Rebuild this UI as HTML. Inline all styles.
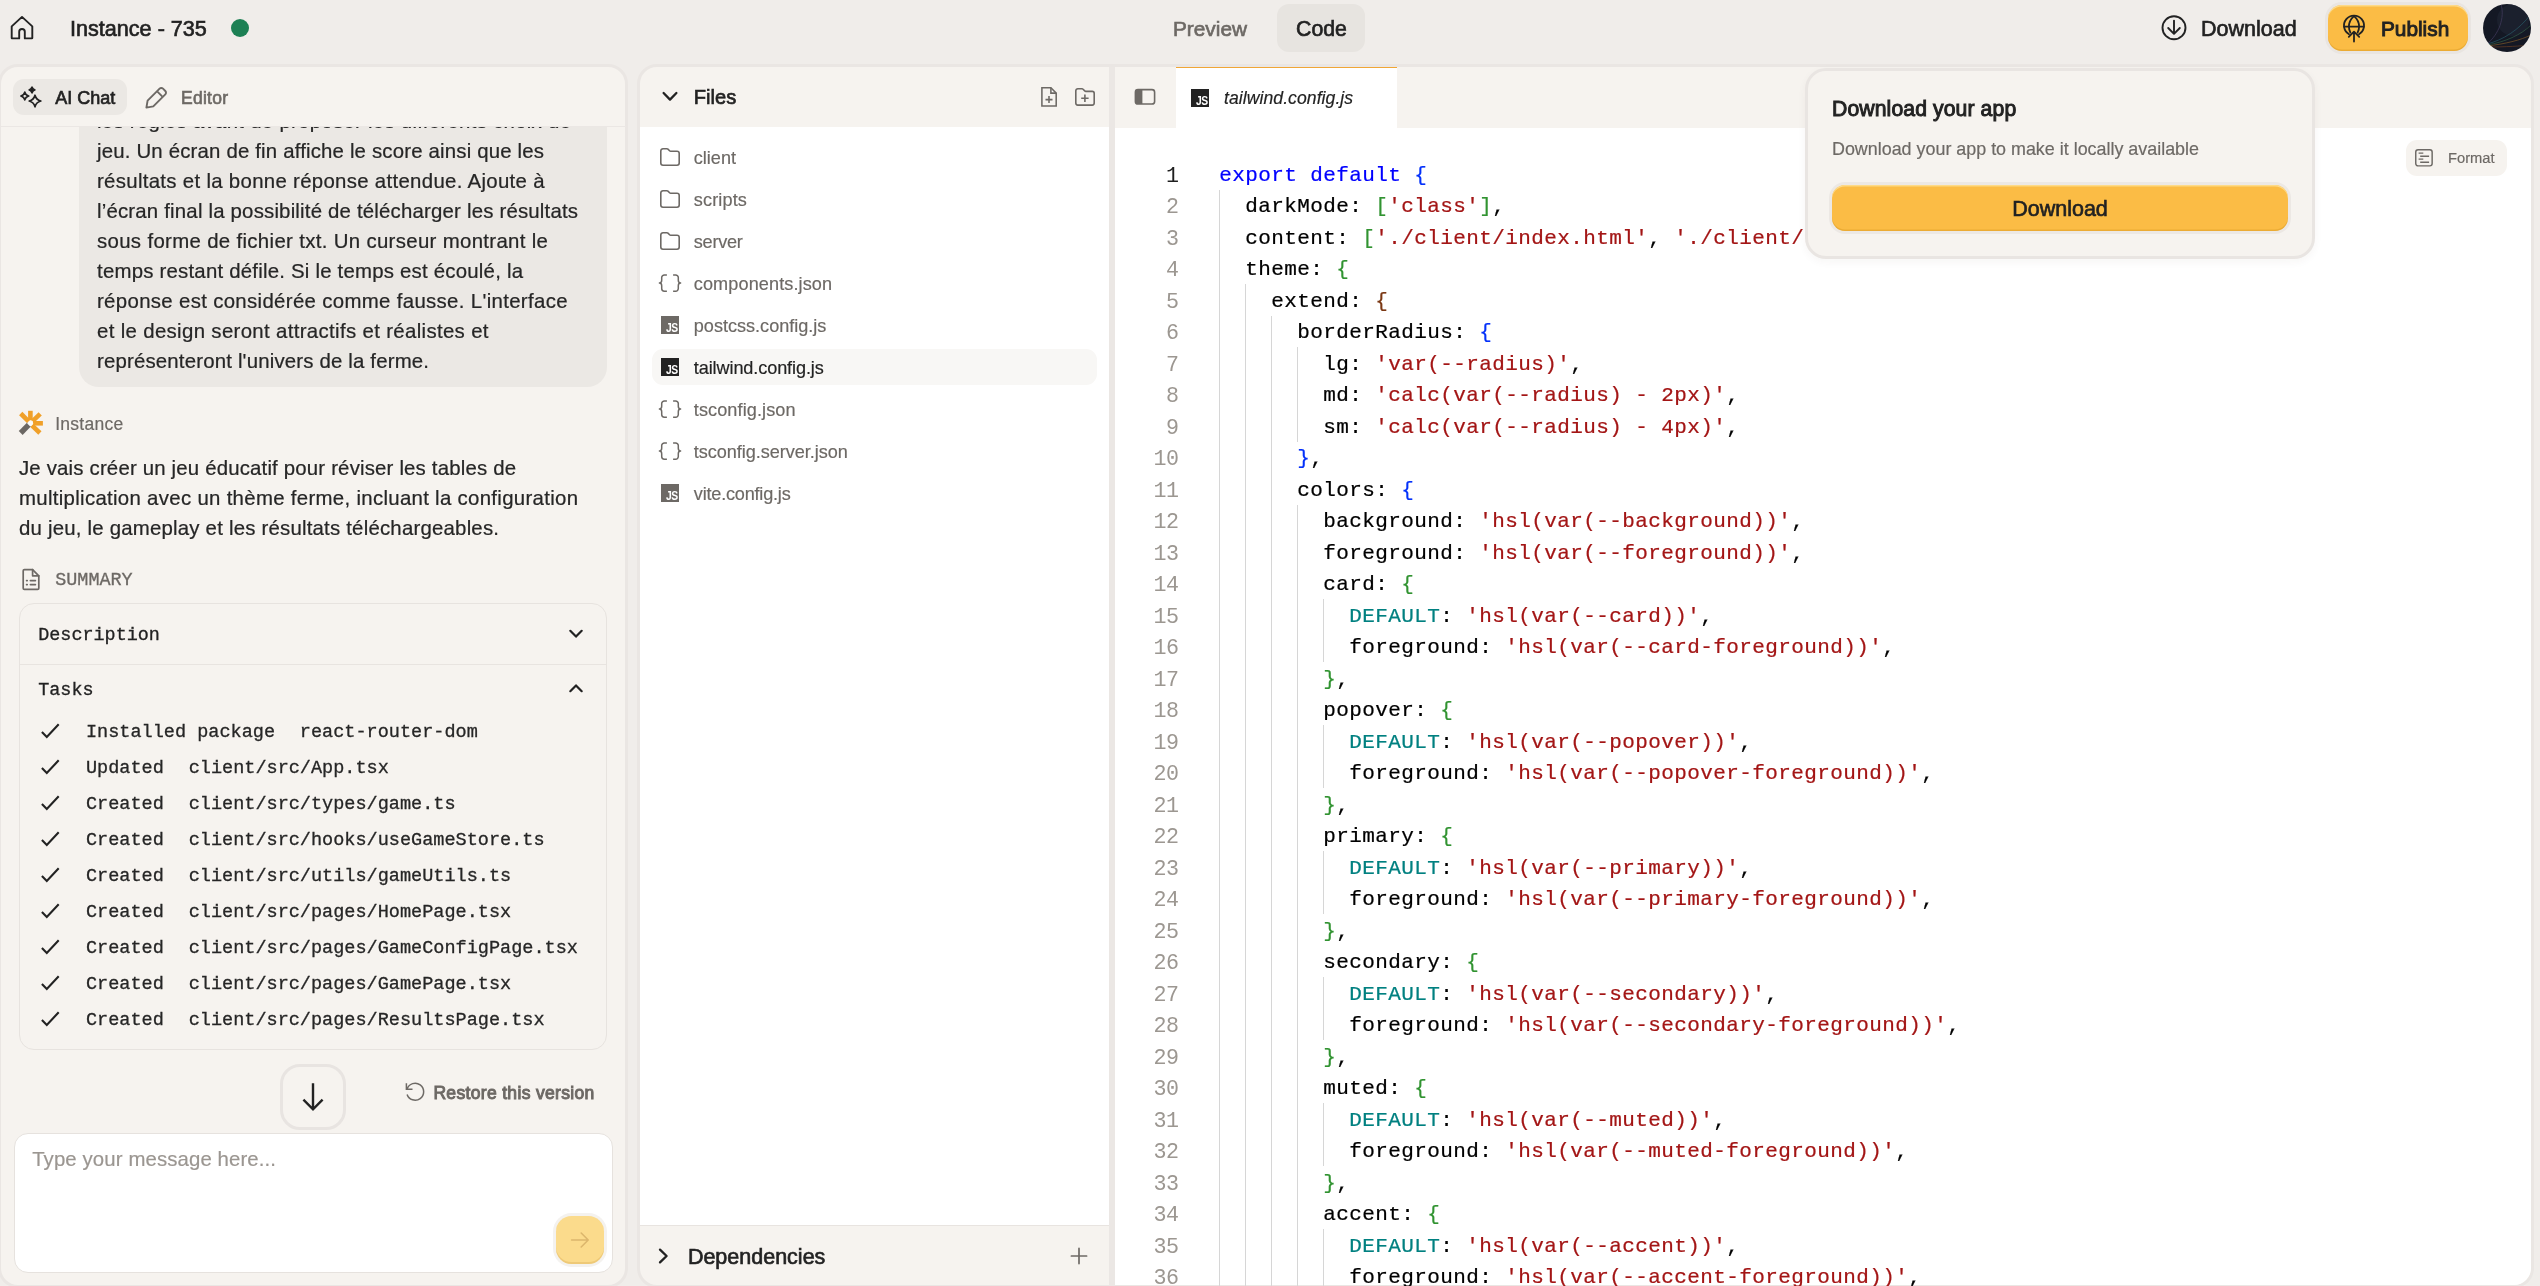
<!DOCTYPE html>
<html lang="en">
<head>
<meta charset="utf-8">
<title>Instance - 735</title>
<style>
*{box-sizing:border-box;margin:0;padding:0}
html,body{width:2540px;height:1286px;overflow:hidden}
body{position:relative;background:#f0edea;font-family:"Liberation Sans",sans-serif;color:#222;-webkit-font-smoothing:antialiased}
#root{position:absolute;left:0;top:0;width:2540px;height:1286px;overflow:hidden;will-change:transform}
.abs{position:absolute}
.t{position:absolute;white-space:nowrap;line-height:30px;-webkit-text-stroke:.18px currentColor}
.med{-webkit-text-stroke:.65px currentColor}
.semi{-webkit-text-stroke:.95px currentColor}
.muted{color:#6d6965}
.mono{font-family:"Liberation Mono",monospace}
svg{position:absolute;overflow:visible}
.ic{fill:none;stroke:currentColor;stroke-width:2;stroke-linecap:round;stroke-linejoin:round}
.panel{position:absolute;background:#f6f3ef;border:3px solid #eae6e3;border-radius:20px;overflow:hidden}
/* ---------- top bar ---------- */
#codepill{left:1277px;top:4px;width:88px;height:48px;border-radius:12px;background:#e7e4e0}
#publish{left:2327.500px;top:4.800px;width:140px;height:46.600px;border-radius:14px;background:#fbbc45;box-shadow:0 0 0 3px #e9e5e1, inset 0 1.500px 0 rgba(255,225,150,.8), inset 0 -1.500px 0 rgba(215,150,30,.45)}
#avatar{left:2483px;top:3.600px;width:48px;height:48px;border-radius:50%;background:#141824;overflow:hidden}
.js{width:18px;height:18px;overflow:hidden}
.js span{position:absolute;right:1.200px;bottom:.700px;font:bold 12px/9px "Liberation Sans",sans-serif;color:#fff;transform:scaleX(.86);transform-origin:right bottom;letter-spacing:-.5px}
/* ---------- left panel ---------- */
.tk{font-size:18.550px;color:#262626}
.mono.t{-webkit-text-stroke:.3px currentColor}
#left{left:-2px;top:64px;width:630px;height:1223.600px}
#files{left:637px;top:64px;width:1897px;height:1223.600px}
/*CODECSS*/
.g{position:absolute;width:1px;background:#d6d6d6}
.ln{left:1100px;width:78.600px;top:160.700px;text-align:right;font-size:21.660px;letter-spacing:-.5px;line-height:31.500px;color:#9c9791}
.ln .a{color:#1f1f1f}
.cd{left:1219.200px;top:159.850px;font-size:21px;letter-spacing:.398px;line-height:31.500px;white-space:pre;color:#000;-webkit-text-stroke:.22px}
.cd i{font-style:normal}.cd .k{color:#0000ff}.cd .s{color:#a31515}.cd .d{color:#008080}
/*/CODECSS*/
</style>
</head>
<body>
<div id="root">

<!-- ================= TOP BAR ================= -->
<svg class="ic" style="left:10px;top:15px;width:26px;height:26px;stroke-width:1.9;stroke-linejoin:round" viewBox="0 0 26 26"><path d="M9.2 23.4H2.2a.5.5 0 0 1-.5-.5V11.4L12 1.9l10.3 9.5v11.5a.5.5 0 0 1-.5.5h-7V16.8a2.8 2.8 0 0 0-5.6 0z"/></svg>
<div class="t med" style="left:70px;top:13.5px;font-size:21.6px">Instance - 735</div>
<div class="abs" style="left:230.800px;top:18.700px;width:18.400px;height:18.400px;border-radius:50%;background:#1d8054"></div>

<div class="t med muted" style="left:1173px;top:13.5px;font-size:20.8px">Preview</div>
<div class="abs" id="codepill"></div>
<div class="t med" style="left:1296px;top:13.5px;font-size:21.3px">Code</div>

<svg class="ic" style="left:2160px;top:14px;width:28px;height:28px;stroke-width:1.9" viewBox="0 0 28 28"><circle cx="14" cy="13.8" r="11.5"/><path d="M14 6.600v13M8.200 14l5.800 5.800 5.800-5.800"/></svg>
<div class="t med" style="left:2201px;top:13.5px;font-size:21.5px">Download</div>
<div class="abs" id="publish"></div>
<svg class="ic" style="left:2342px;top:14px;width:24px;height:29px;stroke-width:1.8" viewBox="0 0 24 29"><path d="M7 20.2A10 10 0 1 1 17 20.2"/><path d="M2.1 12.6h19.8"/><path d="M8.4 18.6C7.4 16.7 6.9 14.7 6.9 12.6 6.9 8.6 8.6 5 12 2.1c3.400 2.900 5.100 6.500 5.100 10.500 0 2.100-.5 4.100-1.500 6"/><path d="M12 27.600V17.600M6.800 22.800l5.200-5.200 5.200 5.200"/></svg>
<div class="t semi" style="left:2381px;top:13.5px;font-size:20.8px">Publish</div>
<div class="abs" id="avatar"><svg style="left:0;top:0;width:48px;height:48px" viewBox="0 0 48 48" fill="none"><circle cx="30" cy="16" r="16" fill="#1e2332" opacity=".7"/><path d="M18 0C22 14 16 30 4 40" stroke="#4a3f66" stroke-width=".7" opacity=".9"/><path d="M4 40C20 36 36 26 48 10" stroke="#2c6a78" stroke-width=".7" opacity=".8"/><path d="M4 41C22 38 38 31 48 21" stroke="#3f7a52" stroke-width=".7" opacity=".7"/><path d="M4 42C22 40 38 36 48 31" stroke="#9a6a2a" stroke-width=".7" opacity=".8"/><path d="M6 43C22 43 38 42 48 41" stroke="#8a4e22" stroke-width=".7" opacity=".7"/></svg></div>

<!-- ================= LEFT PANEL ================= -->
<div class="panel" id="left"></div>
<!--LEFT-->
<!-- tabs header -->
<div class="abs" style="left:13px;top:79px;width:114px;height:36px;border-radius:11px;background:#ebe8e4"></div>
<svg style="left:20px;top:85px;width:23px;height:23px;color:#222" viewBox="20 85 23 23"><path d="M32 86.900Q32.800 89.100 35 89.900Q32.800 90.700 32 92.900Q31.200 90.700 29 89.900Q31.200 89.100 32 86.900Z" fill="currentColor" stroke="currentColor" stroke-width="1.500" stroke-linejoin="round"/><path d="M24.800 92.100Q25.600 95.200 28.700 96Q25.600 96.800 24.800 99.900Q24 96.800 20.900 96Q24 95.200 24.800 92.100Z" fill="none" stroke="currentColor" stroke-width="1.700" stroke-linejoin="round"/><path d="M35 95.200Q36.200 99.800 40.800 101Q36.200 102.200 35 106.800Q33.800 102.200 29.200 101Q33.800 99.800 35 95.200Z" fill="none" stroke="currentColor" stroke-width="1.700" stroke-linejoin="round"/></svg>
<div class="t med" style="left:55.3px;top:82.7px;font-size:18px">AI Chat</div>
<svg class="ic muted" style="left:145px;top:86px;width:23px;height:23px;stroke-width:1.900;stroke-linejoin:round" viewBox="0 0 23 23"><path d="M1.400 21.600L2.600 14.700L14.600 2.700a2.400 2.400 0 0 1 3.400 0l2.300 2.300a2.400 2.400 0 0 1 0 3.400L8.300 20.400z"/><path d="M12.900 6.100l4 4"/></svg>
<div class="t med muted" style="left:181px;top:82.9px;font-size:17.5px;letter-spacing:.25px">Editor</div>
<div class="abs" style="left:1px;top:126px;width:625px;height:1px;background:#ebe7e4"></div>

<!-- user bubble (clipped by header) -->
<div class="abs" style="left:1px;top:127px;width:625px;height:270px;overflow:hidden">
 <div class="abs" style="left:78px;top:-60px;width:528px;height:320px;border-radius:20px;background:#ebe8e4"></div>
 <div class="abs" style="left:96px;top:-21.2px;font-size:20.4px;line-height:30px;white-space:nowrap;color:#262626;-webkit-text-stroke:.22px #262626">
<div style="letter-spacing:0.278px">les règles avant de proposer les différents choix de</div>
<div style="letter-spacing:0.174px">jeu. Un écran de fin affiche le score ainsi que les</div>
<div style="letter-spacing:0.307px">résultats et la bonne réponse attendue. Ajoute à</div>
<div style="letter-spacing:0.190px">l’écran final la possibilité de télécharger les résultats</div>
<div style="letter-spacing:0.329px">sous forme de fichier txt. Un curseur montrant le</div>
<div style="letter-spacing:0.214px">temps restant défile. Si le temps est écoulé, la</div>
<div style="letter-spacing:0.330px">réponse est considérée comme fausse. L'interface</div>
<div style="letter-spacing:0.338px">et le design seront attractifs et réalistes et</div>
<div style="letter-spacing:0.173px">représenteront l'univers de la ferme.</div>
 </div>
</div>

<!-- assistant -->
<svg style="left:18px;top:410px;width:26px;height:26px" viewBox="0 0 26 26" fill="none" stroke-linecap="butt"><g stroke="#f0a029" stroke-width="4.6"><path d="M12.4 .8V10.4"/><path d="M15 13.3H24.900"/><path d="M2.700 3.500L10.600 11.400"/><path d="M22.200 3.900L14.600 11.200"/><path d="M21.900 23L13.900 15.300"/></g><path d="M2.700 23L11.100 14.400" stroke="#6b6763" stroke-width="5.400"/><path d="M12.300 10.300l3.100 3.100-3.100 3.100-3.100-3.100z" fill="#fbfaf8"/></svg>
<div class="t muted" style="left:55.2px;top:408.9px;font-size:17.5px;letter-spacing:.26px">Instance</div>
<div class="abs" style="left:19px;top:453.3px;font-size:20.4px;line-height:30px;white-space:nowrap;color:#262626;-webkit-text-stroke:.22px #262626">
<div style="letter-spacing:0.175px">Je vais créer un jeu éducatif pour réviser les tables de</div>
<div style="letter-spacing:0.306px">multiplication avec un thème ferme, incluant la configuration</div>
<div style="letter-spacing:0.206px">du jeu, le gameplay et les résultats téléchargeables.</div>
</div>

<!-- summary -->
<svg class="ic muted" style="left:21px;top:568px;width:20px;height:23px;stroke-width:1.7" viewBox="0 0 20 23"><path d="M11.6 1.6H3.4a1.2 1.2 0 0 0-1.2 1.2v17.4a1.2 1.2 0 0 0 1.2 1.2h13.2a1.2 1.2 0 0 0 1.2-1.2V7.8z"/><path d="M11.6 1.6v6.2h6.2"/><path d="M5.6 12.6h.6M5.6 16.6h.6M9.4 12.6h5M9.4 16.6h5"/></svg>
<div class="t mono muted" style="left:55.2px;top:565.700px;font-size:18.450px">SUMMARY</div>
<div class="abs" style="left:19px;top:603px;width:588px;height:446.500px;border:1.300px solid #e7e3df;border-radius:15px"></div>
<div class="t mono" style="left:38.2px;top:620.700px;font-size:18.450px">Description</div>
<svg class="ic" style="left:569px;top:629px;width:14px;height:10px;stroke-width:2.2" viewBox="0 0 14 10"><path d="M1.3 1.8L7 7.6l5.7-5.8"/></svg>
<div class="abs" style="left:20px;top:664px;width:586px;height:1px;background:#e8e4e0"></div>
<div class="t mono" style="left:38.2px;top:675.800px;font-size:18.450px">Tasks</div>
<svg class="ic" style="left:569px;top:683px;width:14px;height:10px;stroke-width:2.2" viewBox="0 0 14 10"><path d="M1.3 8.2L7 2.4l5.7 5.8"/></svg>
<svg class="ic" style="left:41px;top:723px;width:19px;height:15px;stroke-width:2.1;stroke-linecap:butt;stroke-linejoin:miter" viewBox="0 0 19 15"><path d="M.9 8.9l4.9 5L17.700 1.300"/></svg>
<div class="t mono tk" style="left:86px;top:717.8px">Installed package<span style="margin-left:13.700px"> react-router-dom</span></div>
<svg class="ic" style="left:41px;top:759px;width:19px;height:15px;stroke-width:2.1;stroke-linecap:butt;stroke-linejoin:miter" viewBox="0 0 19 15"><path d="M.9 8.9l4.9 5L17.700 1.300"/></svg>
<div class="t mono tk" style="left:86px;top:753.8px">Updated<span style="margin-left:13.700px"> client/src/App.tsx</span></div>
<svg class="ic" style="left:41px;top:795px;width:19px;height:15px;stroke-width:2.1;stroke-linecap:butt;stroke-linejoin:miter" viewBox="0 0 19 15"><path d="M.9 8.9l4.9 5L17.700 1.300"/></svg>
<div class="t mono tk" style="left:86px;top:789.8px">Created<span style="margin-left:13.700px"> client/src/types/game.ts</span></div>
<svg class="ic" style="left:41px;top:831px;width:19px;height:15px;stroke-width:2.1;stroke-linecap:butt;stroke-linejoin:miter" viewBox="0 0 19 15"><path d="M.9 8.9l4.9 5L17.700 1.300"/></svg>
<div class="t mono tk" style="left:86px;top:825.8px">Created<span style="margin-left:13.700px"> client/src/hooks/useGameStore.ts</span></div>
<svg class="ic" style="left:41px;top:867px;width:19px;height:15px;stroke-width:2.1;stroke-linecap:butt;stroke-linejoin:miter" viewBox="0 0 19 15"><path d="M.9 8.9l4.9 5L17.700 1.300"/></svg>
<div class="t mono tk" style="left:86px;top:861.8px">Created<span style="margin-left:13.700px"> client/src/utils/gameUtils.ts</span></div>
<svg class="ic" style="left:41px;top:903px;width:19px;height:15px;stroke-width:2.1;stroke-linecap:butt;stroke-linejoin:miter" viewBox="0 0 19 15"><path d="M.9 8.9l4.9 5L17.700 1.300"/></svg>
<div class="t mono tk" style="left:86px;top:897.8px">Created<span style="margin-left:13.700px"> client/src/pages/HomePage.tsx</span></div>
<svg class="ic" style="left:41px;top:939px;width:19px;height:15px;stroke-width:2.1;stroke-linecap:butt;stroke-linejoin:miter" viewBox="0 0 19 15"><path d="M.9 8.9l4.9 5L17.700 1.300"/></svg>
<div class="t mono tk" style="left:86px;top:933.8px">Created<span style="margin-left:13.700px"> client/src/pages/GameConfigPage.tsx</span></div>
<svg class="ic" style="left:41px;top:975px;width:19px;height:15px;stroke-width:2.1;stroke-linecap:butt;stroke-linejoin:miter" viewBox="0 0 19 15"><path d="M.9 8.9l4.9 5L17.700 1.300"/></svg>
<div class="t mono tk" style="left:86px;top:969.8px">Created<span style="margin-left:13.700px"> client/src/pages/GamePage.tsx</span></div>
<svg class="ic" style="left:41px;top:1011px;width:19px;height:15px;stroke-width:2.1;stroke-linecap:butt;stroke-linejoin:miter" viewBox="0 0 19 15"><path d="M.9 8.9l4.9 5L17.700 1.300"/></svg>
<div class="t mono tk" style="left:86px;top:1005.8px">Created<span style="margin-left:13.700px"> client/src/pages/ResultsPage.tsx</span></div>

<!-- scroll-down + restore -->
<div class="abs" style="left:279.800px;top:1064px;width:66px;height:65.700px;border:3px solid #e8e4e1;border-radius:20px;background:#f6f3ef"></div>
<svg class="ic" style="left:301px;top:1082px;width:24px;height:30px;stroke-width:2.400;stroke-linecap:butt;stroke-linejoin:miter" viewBox="0 0 24 30"><path d="M12 1.300v26M2.400 17.600l9.600 9.700 9.600-9.700"/></svg>
<svg class="ic muted" style="left:404px;top:1081px;width:22px;height:22px;stroke-width:1.500;stroke-linecap:butt;stroke-linejoin:miter" viewBox="0 0 22 22"><path d="M2.400 2.300V8.300H8.500"/><path d="M3.100 8A8.500 8.500 0 1 1 3.100 13.400"/></svg>
<div class="t semi muted" style="left:433.4px;top:1077.5px;font-size:17.5px;letter-spacing:.33px">Restore this version</div>

<!-- input -->
<div class="abs" style="left:13.600px;top:1133px;width:599px;height:139.800px;border:1.500px solid #e6e2de;border-radius:14px;background:#fff"></div>
<div class="t" style="left:32.2px;top:1144px;font-size:20.4px;letter-spacing:.1px;color:#9b9691">Type your message here...</div>
<div class="abs" style="left:556px;top:1216px;width:48px;height:48px;border-radius:15.500px;background:#fbdb8c;box-shadow:0 0 0 3px #f4f2ef, inset 0 -2px 0 rgba(214,170,80,.35)"></div>
<svg class="ic" style="left:570px;top:1230px;width:20px;height:20px;color:#dcb66c;stroke-width:1.6" viewBox="0 0 20 20"><path d="M1.6 10h16.6M11.2 3l7 7-7 7"/></svg>
<!--/LEFT-->

<!-- ================= FILES + CODE PANEL ================= -->
<div class="panel" id="files">
<div class="abs" style="left:0;top:59.5px;width:469px;height:1098.5px;background:#fff"></div>
<div class="abs" style="left:0;top:1158px;width:469px;height:1px;background:#e8e4e0"></div>
<div class="abs" style="left:469px;top:0;width:6px;height:1300px;background:#ebe7e4"></div>
<div class="abs" style="left:475px;top:60.500px;width:1500px;height:1300px;background:#fff"></div>
<div class="abs" style="left:536px;top:-.500px;width:220.500px;height:62px;background:#fff;border-top:1.700px solid #f0a636"></div>
</div><!--/FILESPANEL-->
<!--FILES-->
<svg class="ic" style="left:662px;top:91px;width:16px;height:11px;stroke-width:2.3" viewBox="0 0 16 11"><path d="M1.6 2l6.4 6.6L14.4 2"/></svg>
<div class="t med" style="left:693.8px;top:82px;font-size:20.1px">Files</div>
<svg class="ic muted" style="left:1040px;top:86px;width:18px;height:22px;stroke-width:1.550;stroke-linejoin:miter;stroke-linecap:butt" viewBox="0 0 18 22"><path d="M10.900 1.800L16.200 7.100H10.900z" fill="#fdfcfb" stroke="none"/><path d="M1.900 1.800H10.900L16.200 7.100V20H1.900z"/><path d="M10.900 1.800V7.100H16.200"/><path d="M5.500 13.600H12.500M9 10.100V17.100"/></svg>
<svg class="ic muted" style="left:1074px;top:87px;width:22px;height:20px;stroke-width:1.600;stroke-linecap:butt" viewBox="0 0 22 20"><path d="M1.800 16.100V3.800a2 2 0 0 1 2-2h4.200a1.500 1.500 0 0 1 1.060.44l1.700 1.700a1.500 1.500 0 0 0 1.060.44H18.200a2 2 0 0 1 2 2V16.100a2 2 0 0 1-2 2H3.800a2 2 0 0 1-2-2z"/><path d="M7.200 11.300H14.600M10.900 7.600V15"/></svg>
<svg class="ic muted" style="left:659px;top:147px;width:22px;height:20px;stroke-width:1.600" viewBox="0 0 22 20"><path d="M1.800 16V3.900a2.200 2.200 0 0 1 2.200-2.200h3.900a1.500 1.500 0 0 1 1.060.44l1.620 1.620a1.500 1.500 0 0 0 1.060.44H18a2.200 2.200 0 0 1 2.200 2.200V16a2.200 2.200 0 0 1-2.200 2.200H4a2.200 2.200 0 0 1-2.200-2.200z"/></svg>
<div class="t muted" style="left:693.8px;top:142.7px;font-size:18.1px;letter-spacing:-0.010px">client</div>
<svg class="ic muted" style="left:659px;top:189px;width:22px;height:20px;stroke-width:1.600" viewBox="0 0 22 20"><path d="M1.800 16V3.900a2.200 2.200 0 0 1 2.200-2.200h3.900a1.500 1.500 0 0 1 1.060.44l1.620 1.620a1.500 1.500 0 0 0 1.060.44H18a2.200 2.200 0 0 1 2.200 2.200V16a2.200 2.200 0 0 1-2.200 2.200H4a2.200 2.200 0 0 1-2.200-2.200z"/></svg>
<div class="t muted" style="left:693.8px;top:184.7px;font-size:18.1px;letter-spacing:0.136px">scripts</div>
<svg class="ic muted" style="left:659px;top:231px;width:22px;height:20px;stroke-width:1.600" viewBox="0 0 22 20"><path d="M1.800 16V3.900a2.200 2.200 0 0 1 2.200-2.200h3.900a1.500 1.500 0 0 1 1.060.44l1.620 1.620a1.500 1.500 0 0 0 1.060.44H18a2.200 2.200 0 0 1 2.200 2.200V16a2.200 2.200 0 0 1-2.200 2.200H4a2.200 2.200 0 0 1-2.200-2.200z"/></svg>
<div class="t muted" style="left:693.8px;top:226.7px;font-size:18.1px;letter-spacing:-0.256px">server</div>
<svg class="ic muted" style="left:659px;top:273px;width:22px;height:20px;stroke-width:1.500;stroke-linecap:butt" viewBox="0 0 22 20"><path d="M7.900 1.900H5.400a2.700 2.700 0 0 0-2.700 2.700V7.300c0 1.600-.9 2.700-2.300 2.700 1.400 0 2.300 1.100 2.300 2.700v2.800a2.700 2.700 0 0 0 2.700 2.700H7.900"/><path d="M14.100 1.900H16.600a2.700 2.700 0 0 1 2.700 2.700V7.300c0 1.600.9 2.700 2.300 2.700-1.400 0-2.300 1.100-2.300 2.700v2.800a2.700 2.700 0 0 1-2.700 2.700H14.100"/></svg>
<div class="t muted" style="left:693.8px;top:268.7px;font-size:18.1px;letter-spacing:0.107px">components.json</div>
<div class="abs js" style="left:661px;top:316px;background:#6d6965"><span>JS</span></div>
<div class="t muted" style="left:693.8px;top:310.7px;font-size:18.1px;letter-spacing:-0.009px">postcss.config.js</div>
<div class="abs" style="left:652px;top:349px;width:445px;height:36px;border-radius:11px;background:#f8f7f5"></div>
<div class="abs js" style="left:661px;top:358px;background:#222"><span>JS</span></div>
<div class="t" style="left:693.8px;top:352.7px;font-size:18.1px;letter-spacing:-0.103px">tailwind.config.js</div>
<svg class="ic muted" style="left:659px;top:399px;width:22px;height:20px;stroke-width:1.500;stroke-linecap:butt" viewBox="0 0 22 20"><path d="M7.900 1.900H5.400a2.700 2.700 0 0 0-2.700 2.700V7.300c0 1.600-.9 2.700-2.300 2.700 1.400 0 2.300 1.100 2.300 2.700v2.800a2.700 2.700 0 0 0 2.700 2.700H7.900"/><path d="M14.100 1.900H16.600a2.700 2.700 0 0 1 2.700 2.700V7.300c0 1.600.9 2.700 2.300 2.700-1.400 0-2.300 1.100-2.300 2.700v2.800a2.700 2.700 0 0 1-2.700 2.700H14.100"/></svg>
<div class="t muted" style="left:693.8px;top:394.7px;font-size:18.1px;letter-spacing:0.093px">tsconfig.json</div>
<svg class="ic muted" style="left:659px;top:441px;width:22px;height:20px;stroke-width:1.500;stroke-linecap:butt" viewBox="0 0 22 20"><path d="M7.900 1.900H5.400a2.700 2.700 0 0 0-2.700 2.700V7.300c0 1.600-.9 2.700-2.300 2.700 1.400 0 2.300 1.100 2.300 2.700v2.800a2.700 2.700 0 0 0 2.700 2.700H7.900"/><path d="M14.100 1.900H16.600a2.700 2.700 0 0 1 2.700 2.700V7.300c0 1.600.9 2.700 2.300 2.700-1.400 0-2.300 1.100-2.300 2.700v2.800a2.700 2.700 0 0 1-2.700 2.700H14.100"/></svg>
<div class="t muted" style="left:693.8px;top:436.7px;font-size:18.1px;letter-spacing:-0.046px">tsconfig.server.json</div>
<div class="abs js" style="left:661px;top:484px;background:#6d6965"><span>JS</span></div>
<div class="t muted" style="left:693.8px;top:478.7px;font-size:18.1px;letter-spacing:-0.205px">vite.config.js</div>
<svg class="ic" style="left:658px;top:1248px;width:11px;height:16px;stroke-width:2.3" viewBox="0 0 11 16"><path d="M2 1.6L8.6 8 2 14.4"/></svg>
<div class="t med" style="left:687.9px;top:1241.5px;font-size:21.5px">Dependencies</div>
<svg class="ic muted" style="left:1070px;top:1247px;width:18px;height:18px;stroke-width:1.7" viewBox="0 0 18 18"><path d="M9 1.4v15.2M1.4 9h15.2"/></svg>
<!--/FILES-->
<!--CODE-->
<svg style="left:1134px;top:88px;width:22px;height:18px" viewBox="0 0 22 18" fill="none"><rect x="1.4" y="1.6" width="19.2" height="14.4" rx="2.6" stroke="#6d6965" stroke-width="1.6"/><path d="M1.4 4.2a2.6 2.6 0 0 1 2.6-2.6h4.4V16H4a2.6 2.6 0 0 1-2.6-2.6z" fill="#6d6965"/></svg>
<div class="abs js" style="left:1191px;top:89px;background:#222"><span>JS</span></div>
<div class="t" style="left:1224px;top:82.900px;font-size:17.600px;letter-spacing:.06px;font-style:italic">tailwind.config.js</div>
<div class="abs" style="left:2406px;top:140px;width:101.200px;height:35.800px;border-radius:11px;background:#f6f3ef"></div>
<svg class="ic muted" style="left:2414px;top:148px;width:20px;height:20px;stroke-width:1.450;stroke-linecap:butt" viewBox="0 0 20 20"><rect x="1.750" y="1.650" width="16.400" height="16.200" rx="2.300"/><path d="M4.600 5.100h4.700M6.200 8.200h8.900M4.600 11.100h4.700M6.200 14.300h8.900"/></svg>
<div class="t muted" style="left:2448px;top:142.600px;font-size:14.700px">Format</div>
<div class="g" style="left:1219px;top:189.5px;height:1102.5px"></div>
<div class="g" style="left:1245px;top:284.0px;height:1008.0px"></div>
<div class="g" style="left:1271px;top:315.5px;height:976.5px"></div>
<div class="g" style="left:1297px;top:347.0px;height:94.5px"></div>
<div class="g" style="left:1297px;top:504.5px;height:787.5px"></div>
<div class="g" style="left:1323px;top:599.0px;height:63.0px"></div>
<div class="g" style="left:1323px;top:725.0px;height:63.0px"></div>
<div class="g" style="left:1323px;top:851.0px;height:63.0px"></div>
<div class="g" style="left:1323px;top:977.0px;height:63.0px"></div>
<div class="g" style="left:1323px;top:1103.0px;height:63.0px"></div>
<div class="g" style="left:1323px;top:1229.0px;height:63.0px"></div>
<div class="abs mono ln" id="ln"><div class="a">1</div><div>2</div><div>3</div><div>4</div><div>5</div><div>6</div><div>7</div><div>8</div><div>9</div><div>10</div><div>11</div><div>12</div><div>13</div><div>14</div><div>15</div><div>16</div><div>17</div><div>18</div><div>19</div><div>20</div><div>21</div><div>22</div><div>23</div><div>24</div><div>25</div><div>26</div><div>27</div><div>28</div><div>29</div><div>30</div><div>31</div><div>32</div><div>33</div><div>34</div><div>35</div><div>36</div></div>
<div class="abs mono cd" id="cd"><div><i class="k">export</i> <i class="k">default</i> <i style="color:#0431fa">{</i></div><div>  darkMode: <i style="color:#319331">[</i><i class="s">'class'</i><i style="color:#319331">]</i>,</div><div>  content: <i style="color:#319331">[</i><i class="s">'./client/index.html'</i>, <i class="s">'./client/src/**/*.{js,ts,jsx,tsx}'</i><i style="color:#319331">]</i>,</div><div>  theme: <i style="color:#319331">{</i></div><div>    extend: <i style="color:#7b3814">{</i></div><div>      borderRadius: <i style="color:#0431fa">{</i></div><div>        lg: <i class="s">'var(--radius)'</i>,</div><div>        md: <i class="s">'calc(var(--radius) - 2px)'</i>,</div><div>        sm: <i class="s">'calc(var(--radius) - 4px)'</i>,</div><div>      <i style="color:#0431fa">}</i>,</div><div>      colors: <i style="color:#0431fa">{</i></div><div>        background: <i class="s">'hsl(var(--background))'</i>,</div><div>        foreground: <i class="s">'hsl(var(--foreground))'</i>,</div><div>        card: <i style="color:#319331">{</i></div><div>          <i class="d">DEFAULT</i>: <i class="s">'hsl(var(--card))'</i>,</div><div>          foreground: <i class="s">'hsl(var(--card-foreground))'</i>,</div><div>        <i style="color:#319331">}</i>,</div><div>        popover: <i style="color:#319331">{</i></div><div>          <i class="d">DEFAULT</i>: <i class="s">'hsl(var(--popover))'</i>,</div><div>          foreground: <i class="s">'hsl(var(--popover-foreground))'</i>,</div><div>        <i style="color:#319331">}</i>,</div><div>        primary: <i style="color:#319331">{</i></div><div>          <i class="d">DEFAULT</i>: <i class="s">'hsl(var(--primary))'</i>,</div><div>          foreground: <i class="s">'hsl(var(--primary-foreground))'</i>,</div><div>        <i style="color:#319331">}</i>,</div><div>        secondary: <i style="color:#319331">{</i></div><div>          <i class="d">DEFAULT</i>: <i class="s">'hsl(var(--secondary))'</i>,</div><div>          foreground: <i class="s">'hsl(var(--secondary-foreground))'</i>,</div><div>        <i style="color:#319331">}</i>,</div><div>        muted: <i style="color:#319331">{</i></div><div>          <i class="d">DEFAULT</i>: <i class="s">'hsl(var(--muted))'</i>,</div><div>          foreground: <i class="s">'hsl(var(--muted-foreground))'</i>,</div><div>        <i style="color:#319331">}</i>,</div><div>        accent: <i style="color:#319331">{</i></div><div>          <i class="d">DEFAULT</i>: <i class="s">'hsl(var(--accent))'</i>,</div><div>          foreground: <i class="s">'hsl(var(--accent-foreground))'</i>,</div></div>
<!--/CODE-->
<!--POPOVER-->
<div class="abs" style="left:1805px;top:67.500px;width:509.500px;height:191px;border:3px solid #e9e5e2;border-radius:21px;background:#f6f3ef;box-shadow:0 3px 9px rgba(60,40,20,.045)"></div>
<div class="t semi" style="left:1832px;top:94.400px;font-size:21.200px;letter-spacing:.1px">Download your app</div>
<div class="t muted" style="left:1832px;top:133.6px;font-size:17.9px">Download your app to make it locally available</div>
<div class="abs" style="left:1832px;top:185.200px;width:456px;height:46.300px;border-radius:13px;background:#fbbc45;box-shadow:0 0 0 3px #ece8e4, inset 0 1.500px 0 rgba(255,225,150,.8), inset 0 -1.500px 0 rgba(215,150,30,.45)"></div>
<div class="t med" style="left:1832px;width:456px;text-align:center;top:194.200px;font-size:21.500px">Download</div>
<!--/POPOVER-->

</div>
</body>
</html>
